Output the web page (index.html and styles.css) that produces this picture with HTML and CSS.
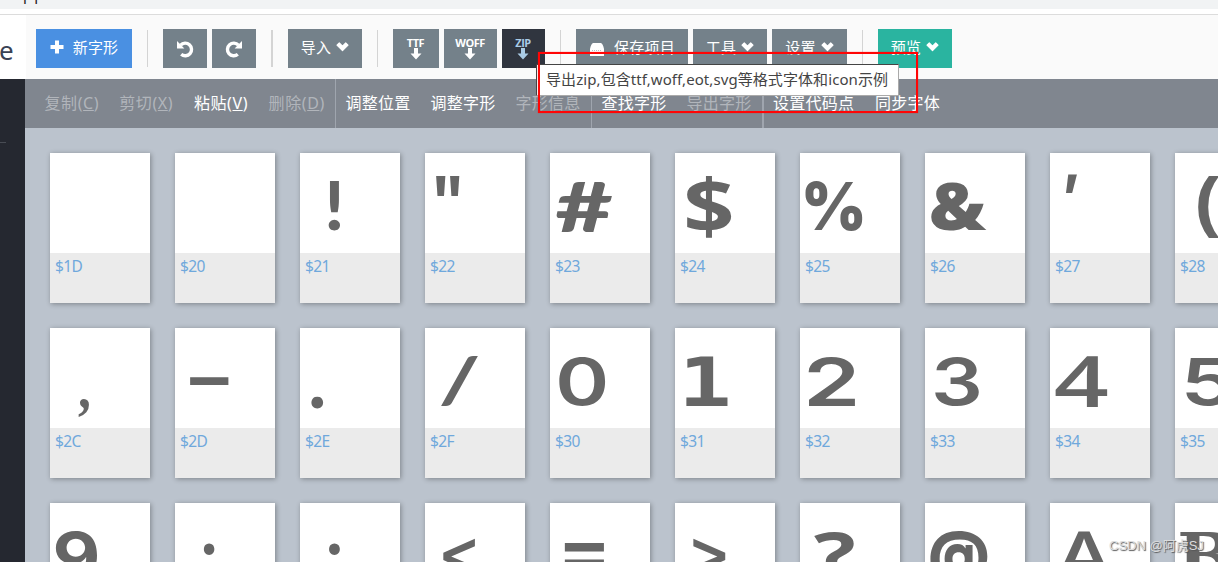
FILE: index.html
```html
<!DOCTYPE html>
<html lang="zh-CN">
<head>
<meta charset="utf-8">
<title>字体编辑器</title>
<link rel="stylesheet" href="styles.css">
</head>
<body>
<svg class="defs" aria-hidden="true">
  <symbol id="chevron" viewBox="0 0 13 10"><path d="M1 3.1 3.3 1 6.5 4.1 9.7 1 12 3.1 6.5 8.6z" stroke="currentColor" stroke-width="1.2" stroke-linejoin="round"/></symbol>
  <symbol id="down" viewBox="0 0 12 12"><path d="M4 0h4v5.5h3.5L6 11.5.5 5.5H4z"/></symbol>
  <symbol id="rotate" viewBox="0 0 18 18"><path d="M4.6 5.2A6.3 6.3 0 1 1 5.2 14.3" fill="none" stroke="currentColor" stroke-width="3.4"/><path d="M1 1v7.4h7.4z"/></symbol>
</svg>
<div class="chrome">pp</div>
<header class="header">
  <div class="logo">e</div>
  <div class="toolbar">
    <button class="btn blue add"><svg class="plus" viewBox="0 0 14 14"><path d="M5 .5h4V5h4.5v4H9v4.5H5V9H.5V5H5z"/></svg>新字形</button>
    <i class="sep"></i>
    <button class="btn turn"><svg><use href="#rotate"/></svg></button>
    <button class="btn turn redo"><svg><use href="#rotate"/></svg></button>
    <i class="sep wide"></i>
    <button class="btn drop">导入<svg><use href="#chevron"/></svg></button>
    <i class="sep"></i>
    <button class="btn export ttf"><b>TTF</b><svg><use href="#down"/></svg></button>
    <button class="btn export woff"><b>WOFF</b><svg><use href="#down"/></svg></button>
    <button class="btn export zip"><b>ZIP</b><svg><use href="#down"/></svg></button>
    <i class="sep"></i>
    <button class="btn save"><svg viewBox="0 0 16 14"><path d="M4 1h8q2 1 3 6v7H1V7q1-5 3-6z"/><path d="M3 8.5h10M4 10.5h9" stroke="#74818a" stroke-dasharray="1 1" stroke-width=".5"/></svg>保存项目</button>
    <button class="btn drop">工具<svg><use href="#chevron"/></svg></button>
    <button class="btn drop set">设置<svg><use href="#chevron"/></svg></button>
    <i class="sep"></i>
    <button class="btn drop green">预览<svg><use href="#chevron"/></svg></button>
  </div>
</header>
<div class="body">
  <aside class="side"><i></i></aside>
  <main class="main">
    <nav class="menu">
      <span class="item key off">复制(<u>C</u>)</span>
      <span class="item key off">剪切(<u>X</u>)</span>
      <span class="item key">粘贴(<u>V</u>)</span>
      <span class="item key off last">删除(<u>D</u>)</span>
      <span class="item">调整位置</span>
      <span class="item">调整字形</span>
      <span class="item off last">字形信息</span>
      <span class="item">查找字形</span>
      <span class="item off last double">导出字形</span>
      <span class="item code">设置代码点</span>
      <span class="item">同步字体</span>
    </nav>
    <div class="grid" id="grid"></div>
  </main>
</div>
<div class="tip">导出zip,包含ttf,woff,eot,svg等格式字体和icon示例</div>
<div class="frame"></div>
<div class="mark">CSDN @阿虎SJ</div>
<script src="glyphs.js"></script>
</body>
</html>
```
FILE: styles.css
```css
* { box-sizing: border-box; }
body { margin: 0; width: 1218px; height: 562px; overflow: hidden; position: relative; background: #fff; font: 15px/20px "Noto Sans", "Noto Sans CJK SC", sans-serif; }
svg { fill: currentColor; }
.defs { position: absolute; width: 0; height: 0; }
.chrome { height: 15px; margin-top: -6px; background: #f1f3f4; padding-left: 23px; font-size: 15px; line-height: 0; letter-spacing: 2px; color: #222; }
.header { display: flex; height: 70px; padding-top: 5px; }
.logo { width: 26px; border-top: 1px solid #dcdcdc; font-size: 26px; line-height: 70px; color: #3a4254; text-indent: -1px; }
.toolbar { flex: 1; display: flex; gap: 5px; border-top: 1px solid #dcdcdc; background: #fafafa; padding: 14px 0 0 10px; }
.btn { height: 39px; border: 0; padding: 0 0 3px; color: #fff; background: #74818a; font: 15px/20px "Noto Sans", "Noto Sans CJK SC", sans-serif; letter-spacing: .2px; display: flex; align-items: center; justify-content: center; flex: none; }
.sep { width: 1px; height: 37px; margin: 1px 10px 0; background: #d4d4d4; flex: none; }
.sep.wide { width: 2px; }
.blue { background: #4a90e2; }
.add { width: 96px; gap: 9px; }
.plus { width: 14px; height: 14px; }
.turn { width: 44px; padding: 1px 0 0; }
.turn svg { width: 18px; height: 18px; }
.redo svg { transform: scaleX(-1); }
.drop { width: 74px; gap: 5px; }
.drop svg { width: 13px; height: 10px; }
.set { width: 75px; }
.green { background: #2ab4a0; }
.export { flex-direction: column; padding: 0 1px 0 0; }
.export b { font: 700 11px/11px "Open Sans", sans-serif; letter-spacing: -.5px; }
.export svg { width: 12px; height: 12px; margin-bottom: 1px; }
.ttf { width: 46px; }
.woff { width: 53px; }
.zip { width: 43px; background: #30353f; color: #a9cbe6; }
.save { width: 112px; gap: 9px; }
.save svg { width: 16px; height: 14px; margin-top: 4px; }
.body { display: flex; height: 483px; }
.side { width: 25px; background: #252830; }
.side i { display: block; width: 6px; height: 1px; margin-top: 63px; background: #484c54; }
.main { flex: 1; min-width: 0; background: #bbc3cd; overflow: hidden; }
.menu { height: 49px; padding-left: 10px; background: #80868f; display: flex; }
.item { width: 85px; flex: none; padding-left: 9.5px; white-space: nowrap; color: #fff; font-size: 16px; line-height: 48px; letter-spacing: .25px; }
.key { width: 74.7px; letter-spacing: .6px; }
.off { color: #b1b5bb; }
.last { border-right: 1px solid #9fa5ae; width: 86px; }
.key.last { width: 76.9px; }
.double { border-right-width: 2px; width: 87px; }
.code { width: 102px; }
.code, .code + .item { padding-left: 9px; }
.grid { display: grid; grid-template-columns: repeat(10, 100px); gap: 25px; padding: 25px; }
.card { height: 150px; background: #ebebeb; box-shadow: 1px 1px 5px rgba(0, 0, 0, .33); }
.card svg { display: block; width: 100px; height: 100px; background: #fff; fill: #666; }
.card p { margin: 0; padding: 3px 5px; color: #6fa8dc; font: 15.5px/20px "Noto Sans", sans-serif; letter-spacing: -.6px; }
.tip { position: absolute; left: 536px; top: 64px; width: 363px; height: 32px; border: 1px solid #444; border-right-color: #aaa; border-bottom-color: #aaa; background: #fff; color: #444; padding-left: 9px; line-height: 28px; letter-spacing: .08px; white-space: nowrap; }
.frame { position: absolute; left: 538px; top: 52px; width: 380px; height: 61px; border: 2px solid #ff0505; box-shadow: 0 0 1px rgba(255, 0, 0, .6); }
.mark { position: absolute; left: 1109px; top: 536px; font: 13px/20px "Liberation Sans", "Noto Sans CJK SC", sans-serif; color: #ddd; text-shadow: 1px 1px 1px #555; white-space: nowrap; }
```
FILE: glyphs.js
```js
// Each entry: code label, character, font, and ink box [left, top, right, bottom] in the 100 unit cell.
const glyphs = [
  ["$1D"], ["$20"],
  ["$21", "!", "900 80px Lato", [27.7, 28.3, 40.7, 78]],
  ["$22", "\"", "700 80px Open Sans", [11, 22, 35.3, 42.7]],
  ["$23", "#", "900 80px Lato", [5.3, 28, 62.7, 78.7]],
  ["$24", "$", "700 80px Open Sans", [11, 22, 57.3, 85]],
  ["$25", "%", "900 80px Inter", [5, 28, 63, 78]],
  ["$26", "&", "800 80px Open Sans", [6, 28.7, 62, 78]],
  ["$27", "'", "italic 700 80px Open Sans", [15.7, 22, 27.7, 41]],
  ["$28", "(", "700 80px Liberation Sans", [23, 22, 45, 85]],
  ["$2C", ",", "700 80px Liberation Serif", [28, 71, 39.3, 89.3]],
  ["$2D", "-", "700 80px Liberation Sans", [14, 49, 54, 58]],
  ["$2E", ".", "900 80px Lato", [11, 68, 23.3, 80.7]],
  ["$2F", "/", "700 80px Lato", [15, 28, 53, 78.7]],
  ["$30", "0", "600 80px Inter", [9, 28.7, 55, 78]],
  ["$31", "1", "700 80px DejaVu Sans Mono", [10.3, 28.7, 53.3, 78]],
  ["$32", "2", "600 80px Inter", [7.3, 28, 56.3, 78]],
  ["$33", "3", "600 80px Inter", [9.7, 28.7, 54.3, 78]],
  ["$34", "4", "600 80px Open Sans", [5.3, 28, 58, 78.5]],
  ["$35", "5", "600 80px Inter", [11, 29.7, 57, 78]],
  ["$39", "9", "700 80px Inter", [4.7, 27.7, 47.3, 78]],
  ["$3A", ":", "900 80px Lato", [28.7, 40, 39.7, 78]],
  ["$3B", ";", "900 80px Lato", [28.7, 40, 40, 88]],
  ["$3C", "<", "700 80px DejaVu Sans", [17.7, 35.3, 50, 72]],
  ["$3D", "=", "700 80px DejaVu Sans", [14, 41, 54, 66]],
  ["$3E", ">", "700 80px DejaVu Sans", [17.7, 35.3, 50.3, 72]],
  ["$3F", "?", "700 80px Open Sans", [14, 28, 53.7, 78]],
  ["$40", "@", "900 80px Inter", [5.3, 28, 62.7, 85]],
  ["$41", "A", "600 80px Open Sans", [6, 28, 63, 78]],
  ["$42", "B", "700 80px DejaVu Serif", [5.3, 28.7, 56, 78]]
];

const NS = "http://www.w3.org/2000/svg";
const ctx = document.createElement("canvas").getContext("2d");
const grid = document.getElementById("grid");

for (const [code, char, font, box] of glyphs) {
  const card = document.createElement("div");
  card.className = "card";
  const svg = document.createElementNS(NS, "svg");
  svg.setAttribute("viewBox", "0 0 100 100");
  if (char) {
    const face = font.replace(/80px (.+)$/, '400px "$1"');
    ctx.font = face;
    const m = ctx.measureText(char);
    const sx = (box[2] - box[0]) / (m.actualBoundingBoxRight + m.actualBoundingBoxLeft);
    const sy = (box[3] - box[1]) / (m.actualBoundingBoxAscent + m.actualBoundingBoxDescent);
    const tx = box[0] + m.actualBoundingBoxLeft * sx;
    const ty = box[1] + m.actualBoundingBoxAscent * sy;
    const text = document.createElementNS(NS, "text");
    text.style.font = face;
    text.setAttribute("transform", `matrix(${sx} 0 0 ${sy} ${tx} ${ty})`);
    text.textContent = char;
    svg.append(text);
  }
  const label = document.createElement("p");
  label.textContent = code;
  card.append(svg, label);
  grid.append(card);
}
```
